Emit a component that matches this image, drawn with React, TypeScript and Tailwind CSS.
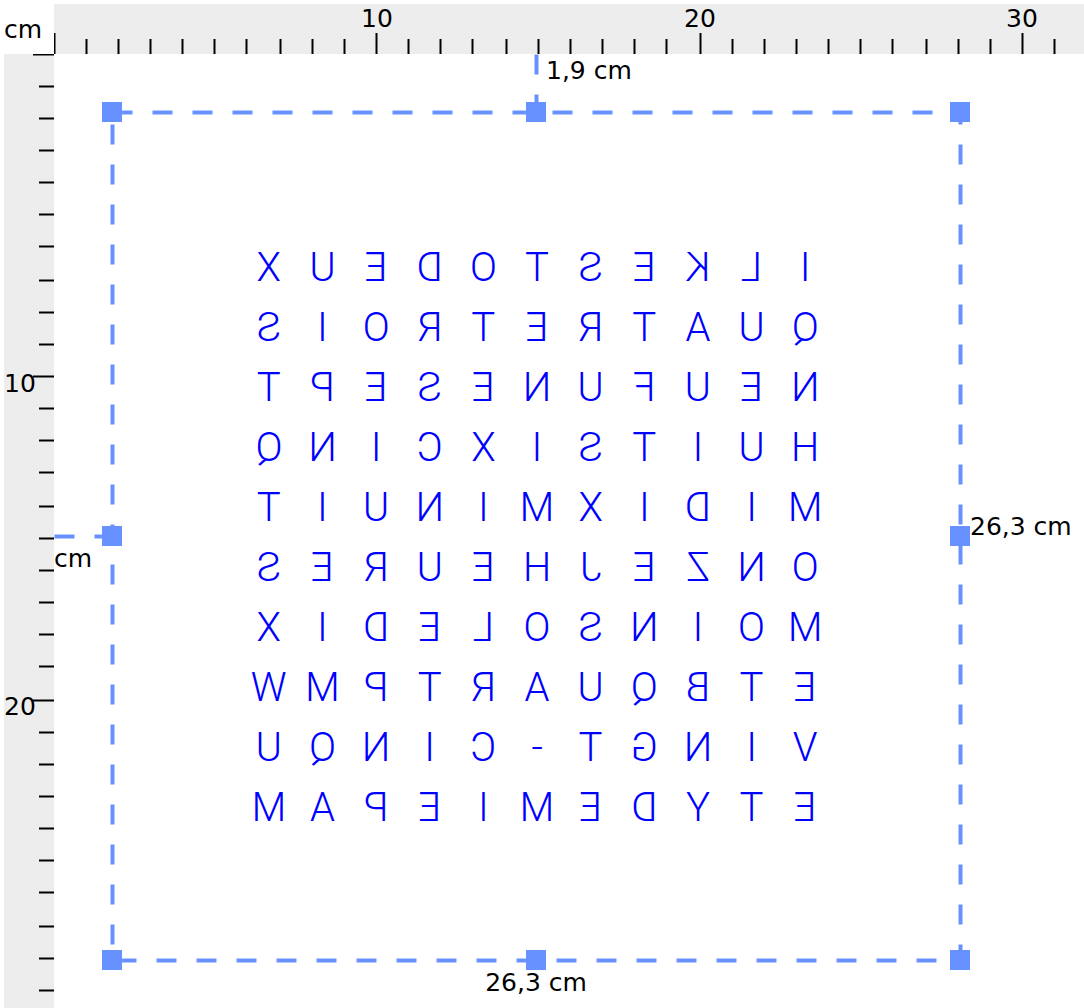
const CM = 32.3;
const TICKS = Array.from({ length: 80 }, (_, n) => n);

const ROWS = [
  "ILKESTODEUX",
  "QUATRETROIS",
  "NEUFUNESEPT",
  "HUITSIXCINQ",
  "MIDIXMINUIT",
  "ONZEJHEURES",
  "MOINSOLEDIX",
  "ETBQUARTPMW",
  "VINGT-CINQU",
  "ETYDEMIEPAM",
];

const HANDLES = [
  { name: "top left", place: "left-0 top-0" },
  { name: "top", place: "left-1/2 top-0" },
  { name: "top right", place: "left-full top-0" },
  { name: "left", place: "left-0 top-1/2" },
  { name: "right", place: "left-full top-1/2" },
  { name: "bottom left", place: "left-0 top-full" },
  { name: "bottom", place: "left-1/2 top-full" },
  { name: "bottom right", place: "left-full top-full" },
];

// Ticks fall on even pixels so that they stay equally sharp.
const tickAt = (n: number) => 2 * Math.floor((n * CM + 0.01) / 2) + 0.5;
const tickStart = (n: number) => (n % 10 === 0 ? 29 : 35);

function TopRuler() {
  return (
    <div className="relative flex-1 overflow-hidden bg-[#ededed]">
      <svg className="absolute inset-0 h-full w-full" stroke="#000" strokeWidth="2" aria-hidden="true">
        {TICKS.map((n) => (
          <line key={n} x1={tickAt(n)} x2={tickAt(n)} y1={n === 0 ? 29 : tickStart(n)} y2="50" />
        ))}
      </svg>
      {[10, 20, 30].map((n) => (
        <span key={n} className="absolute top-0 -translate-x-1/2" style={{ left: Math.floor(n * CM) }}>
          {n}
        </span>
      ))}
    </div>
  );
}

function SideRuler() {
  return (
    <div className="relative w-[50px] shrink-0 overflow-hidden bg-[#ededed]">
      <svg className="absolute inset-0 h-full w-full" stroke="#000" strokeWidth="2" aria-hidden="true">
        {TICKS.map((n) => (
          <line key={n} y1={tickAt(n)} y2={tickAt(n)} x1={tickStart(n)} x2="50" />
        ))}
      </svg>
      {[10, 20].map((n) => (
        <span key={n} className="absolute left-0 -translate-y-2" style={{ top: Math.floor(n * CM) }}>
          {n}
        </span>
      ))}
    </div>
  );
}

function LetterPlate() {
  return (
    <div className="flex w-[590px] -scale-x-100 flex-col font-['Roboto',sans-serif] text-[40px] leading-[60px] font-light text-[#0000ff]">
      {ROWS.map((row) => (
        <div key={row} className="grid grid-cols-11 text-center">
          {row.split("").map((letter, i) => (
            <span key={i}>{letter}</span>
          ))}
        </div>
      ))}
    </div>
  );
}

function Selection() {
  return (
    <div className="relative mt-[58px] ml-[58px] flex size-[848px] items-center justify-center pt-1 pl-0.5">
      <svg
        className="absolute inset-0 h-full w-full overflow-visible"
        fill="none"
        stroke="#6691ff"
        strokeWidth="4"
        strokeDasharray="20 20"
        aria-hidden="true"
      >
        <path d="M.5 .5H848.5V848.5H.5Z" />
        <path d="M424.5 -57.5V0" />
        <path d="M-57.5 424.5H0" />
      </svg>
      <LetterPlate />
      {HANDLES.map((h) => (
        <button
          key={h.name}
          type="button"
          aria-label={`Resize ${h.name}`}
          className={`absolute size-5 -translate-x-1/2 -translate-y-1/2 bg-[#6691ff] ${h.place}`}
        />
      ))}
      <span className="absolute -top-14 left-[434px]">1,9 cm</span>
      <span className="absolute top-[432px] -left-[58px]">cm</span>
      <span className="absolute top-[400px] left-[858px]">26,3 cm</span>
      <span className="absolute top-[856px] left-1/2 -translate-x-1/2">26,3 cm</span>
    </div>
  );
}

export default function App() {
  return (
    <div className="flex h-screen flex-col overflow-hidden bg-white pt-1 pl-1 font-['DejaVu_Sans',sans-serif] text-[25px] leading-[30px] whitespace-nowrap text-black">
      <header className="flex h-[50px] shrink-0">
        <div className="w-[50px] shrink-0 pt-[11px]">cm</div>
        <TopRuler />
      </header>
      <main className="flex min-h-0 flex-1">
        <SideRuler />
        <div className="min-w-0 flex-1">
          <Selection />
        </div>
      </main>
    </div>
  );
}
